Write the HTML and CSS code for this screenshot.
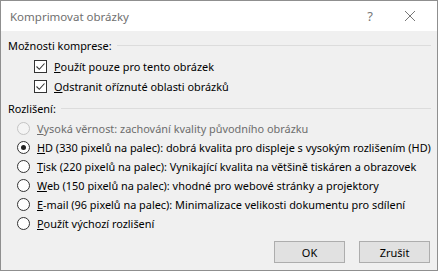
FILE: index.html
```html
<!DOCTYPE html>
<html lang="cs">
<head>
    <meta charset="UTF-8">
    <title>Komprimovat obrázky</title>
    <link rel="stylesheet" href="styles.css">
</head>
<body>

<div class="dialog">
    <div class="titlebar">
        <span class="title">Komprimovat obrázky</span>
        <span class="help">?</span>
        <svg class="close" width="12" height="12" viewBox="0 0 12 12">
            <path d="M1 1 L11 11 M11 1 L1 11" stroke="#777" stroke-width="1" fill="none"/>
        </svg>
    </div>

    <div class="content">
        <div class="group-head">
            <span>Možnosti komprese:</span>
            <div class="rule"></div>
        </div>
        <label class="check-row">
            <span class="checkbox">
                <svg width="11" height="11" viewBox="0 0 11 11"><path d="M1.5 5.5 L4.3 8.3 L9.5 2.5" stroke="#333" stroke-width="1.1" fill="none"/></svg>
            </span>
            <span><u>P</u>oužít pouze pro tento obrázek</span>
        </label>
        <label class="check-row">
            <span class="checkbox">
                <svg width="11" height="11" viewBox="0 0 11 11"><path d="M1.5 5.5 L4.3 8.3 L9.5 2.5" stroke="#333" stroke-width="1.1" fill="none"/></svg>
            </span>
            <span><u>O</u>dstranit oříznuté oblasti obrázků</span>
        </label>

        <div class="group-head second">
            <span>Rozlišení:</span>
            <div class="rule"></div>
        </div>
        <div class="radio-list">
            <label class="radio-row disabled"><span class="radio"></span><span><u>V</u>ysoká věrnost: zachování kvality původního obrázku</span></label>
            <label class="radio-row"><span class="radio checked"></span><span><u>H</u>D (330 pixelů na palec): dobrá kvalita pro displeje s vysokým rozlišením (HD)</span></label>
            <label class="radio-row"><span class="radio"></span><span><u>T</u>isk (220 pixelů na palec): Vynikající kvalita na většině tiskáren a obrazovek</span></label>
            <label class="radio-row"><span class="radio"></span><span><u>W</u>eb (150 pixelů na palec): vhodné pro webové stránky a projektory</span></label>
            <label class="radio-row"><span class="radio"></span><span><u>E</u>-mail (96 pixelů na palec): Minimalizace velikosti dokumentu pro sdílení</span></label>
            <label class="radio-row"><span class="radio"></span><span><u>P</u>oužít výchozí rozlišení</span></label>
        </div>

        <div class="buttons">
            <button class="btn">OK</button>
            <button class="btn">Zrušit</button>
        </div>
    </div>
</div>

</body>
</html>
```

FILE: styles.css
```css
body {
    margin: 0;
    padding: 0;
    background-color: #f0f0f0;
    font-family: 'Noto Sans', sans-serif;
    font-size: 10.9px;
    color: #000;
}

.dialog {
    width: 438px;
    height: 271px;
    box-sizing: border-box;
    border: 1px solid #8f8f8f;
    background-color: #f0f0f0;
    display: flex;
    flex-direction: column;
    white-space: nowrap;
}

.titlebar {
    height: 30px;
    background-color: #ffffff;
    display: flex;
    align-items: center;
    padding-left: 9px;
    padding-right: 21px;
}

.title {
    flex: 1;
    color: #707070;
    font-size: 11.5px;
}

.help {
    color: #777;
    font-size: 13px;
    margin-right: 31px;
}

.content {
    flex: 1;
    padding: 6px 6px 0 7px;
}

.group-head {
    display: flex;
    align-items: center;
    height: 16px;
}

.group-head.second {
    margin-top: 4px;
}

.rule {
    flex: 1;
    border-top: 1px solid #dcdcdc;
    margin-left: 5px;
}

.check-row {
    display: flex;
    align-items: center;
    height: 20px;
    padding-left: 26px;
}

.group-head + .check-row {
    margin-top: 3px;
}

.checkbox {
    flex-shrink: 0;
    width: 11px;
    height: 11px;
    border: 1px solid #333;
    background: #fff;
    display: flex;
    margin-right: 7px;
}

.radio-list {
    margin-top: 3px;
}

.radio-row {
    display: flex;
    align-items: center;
    height: 19px;
    padding-left: 9px;
}

.radio {
    flex-shrink: 0;
    width: 11px;
    height: 11px;
    border: 1px solid #333;
    border-radius: 50%;
    background: #fff;
    margin-right: 7px;
    position: relative;
}

.radio.checked::after {
    content: "";
    position: absolute;
    left: 3px;
    top: 3px;
    width: 5px;
    height: 5px;
    border-radius: 50%;
    background: #222;
}

.radio-row.disabled {
    color: #6d6d6d;
}

.radio-row.disabled .radio {
    border-color: #c4c4c4;
    background: #f4f4f4;
}

.buttons {
    display: flex;
    justify-content: flex-end;
    gap: 14px;
    margin-top: 8px;
    padding-right: 1px;
}

.btn {
    width: 71px;
    height: 22px;
    border: 1px solid #adadad;
    background-color: #e1e1e1;
    font-family: 'Noto Sans', sans-serif;
    font-size: 11px;
    color: #000;
    padding: 0;
}
```
